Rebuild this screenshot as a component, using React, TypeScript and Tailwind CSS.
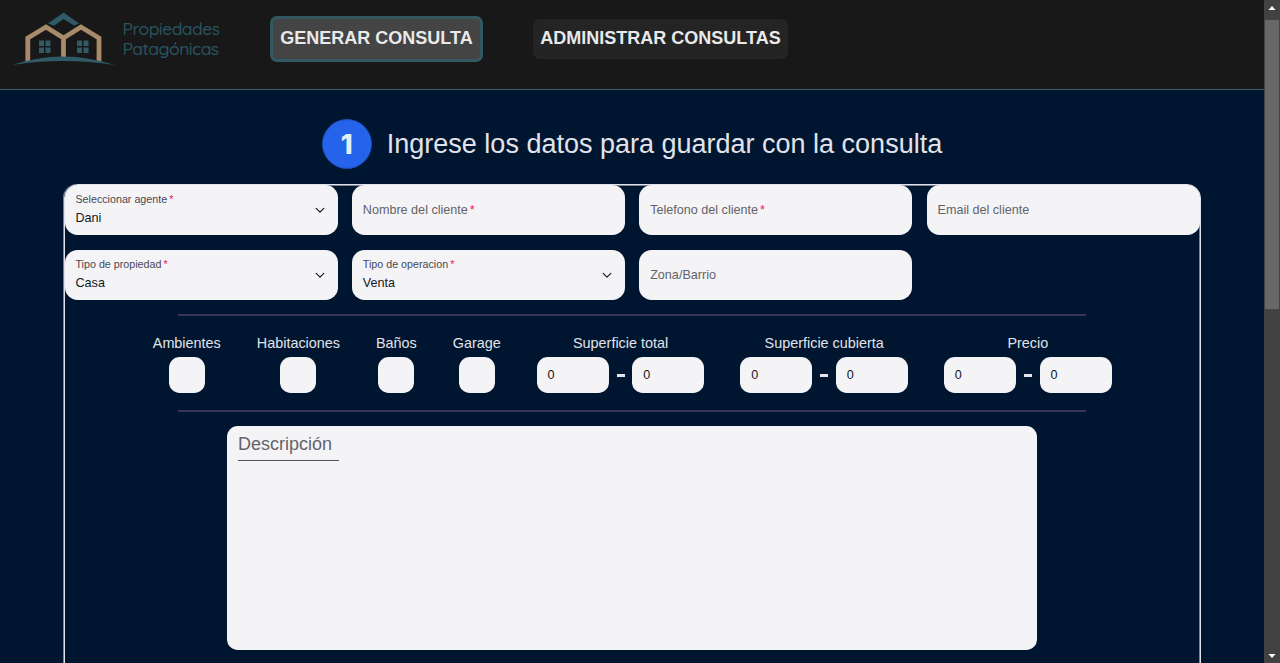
import React from "react";

function Logo() {
  return (
    <svg width="104" height="56" viewBox="0 0 104 56" className="shrink-0">
      <path d="M36 12.5 51.5 1.5 67 12.5 62 14.5 51.5 8 42 14.8Z" fill="#2f5a66" />
      <path
        d="M15.8 50V27L34 16 51.5 27 69 16 87 27V50M51.5 27V46"
        fill="none"
        stroke="#a98a6b"
        strokeWidth="4.8"
      />
      <path
        d="M27 29.500h5v5.500h-5zM33.500 29.500h5v5.500h-5zM27 36.500h5v5.500h-5zM33.500 36.500h5v5.500h-5zM65 29.500h5v5.500h-5zM71.500 29.500h5v5.500h-5zM65 36.500h5v5.500h-5zM71.500 36.500h5v5.500h-5z"
        fill="#2f5a66"
      />
      <path d="M0 54Q25 45.500 51 45.500Q77 45.500 103 54Q77 50 51 50Q25 50 0 54Z" fill="#2f5a66" />
    </svg>
  );
}

function Label({ text, required }: { text: string; required?: boolean }) {
  return (
    <>
      {text}
      {required && <span className="ml-[2px] text-[#f31260]">*</span>}
    </>
  );
}

function SelectField({ label, value }: { label: string; value: string }) {
  return (
    <div className="flex h-[50.4px] items-center justify-between rounded-[12.6px] bg-[#f4f4f7] pl-[10.8px] pr-[12px]">
      <div className="pb-[2px]">
        <div className="text-[10.71px] leading-[18px] text-[#484852]">
          <Label text={label} required />
        </div>
        <div className="text-[12.6px] leading-[20px] text-[#11181c]">{value}</div>
      </div>
      <svg width="12" height="12" viewBox="0 0 12 12" fill="none" stroke="#18181b" strokeWidth="1.2" strokeLinecap="round" strokeLinejoin="round">
        <path d="M2.200 4.400 6 8.100 9.800 4.400" />
      </svg>
    </div>
  );
}

function InputField({ label, required }: { label: string; required?: boolean }) {
  return (
    <div className="flex h-[50.4px] items-center rounded-[12.6px] bg-[#f4f4f7] px-[10.8px] text-[12.6px] text-[#63636b]">
      <span>
        <Label text={label} required={required} />
      </span>
    </div>
  );
}

function Count({ label }: { label: string }) {
  return (
    <div className="flex flex-col items-center">
      <span className="h-[23px] leading-[18px]">{label}</span>
      <div className="size-9 rounded-[10.8px] bg-[#f4f4f7]" />
    </div>
  );
}

function Range({ label }: { label: string }) {
  return (
    <div className="flex flex-col items-center">
      <span className="h-[23px] leading-[18px]">{label}</span>
      <div className="flex text-[12.6px] text-[#11181c]">
        <div className="flex h-9 w-[72px] items-center rounded-[10.8px] bg-[#f4f4f7] pl-[10.8px]">0</div>
        <div className="flex w-[23.6px] items-center justify-center">
          <div className="h-[3px] w-2 bg-[#e4e4ec]" />
        </div>
        <div className="flex h-9 w-[72px] items-center rounded-[10.8px] bg-[#f4f4f7] pl-[10.8px]">0</div>
      </div>
    </div>
  );
}

export default function App() {
  return (
    <div className="flex h-[663px] w-[1280px] overflow-hidden bg-[#001630] font-['Liberation_Sans',Arial,sans-serif]">
      <div className="flex w-[1264px] flex-col">
        <header className="flex h-[90px] shrink-0 items-start border-b border-[#3e5c66] bg-[#181818]">
          <div className="flex w-[270px] pl-[12px] pt-[11px]">
            <Logo />
            <div className="ml-[6.5px] mt-[7px] whitespace-nowrap font-['Quicksand','Lato',sans-serif] text-[17.5px] font-medium leading-[20px] text-[#285560]">
              <div className="tracking-[-0.55px]">Propiedades</div>
              <div className="tracking-[-0.55px]">Patagónicas</div>
            </div>
          </div>
          <nav className="flex items-center pt-4 text-[18px] font-bold text-[#e9e9ea]">
            <button className="h-[46px] w-[213px] whitespace-nowrap rounded-[7px] border-[3px] border-[#325861] bg-[#444] pb-[1px]">
              GENERAR CONSULTA
            </button>
            <button className="ml-[50px] h-10 w-[255px] whitespace-nowrap rounded-[7px] bg-[#242424] pb-[1px]">
              ADMINISTRAR CONSULTAS
            </button>
          </nav>
        </header>

        <main className="flex flex-1 flex-col">
          <div className="flex h-[94px] shrink-0 items-center justify-center gap-[15px] pt-[13px] text-[#e2e3ea]">
            <div className="flex size-[50px] items-center justify-center rounded-full border border-[#1d4cb8] bg-[#2563eb] pt-[4px] font-['Inter',sans-serif] text-[27px] font-extrabold text-[#e4eefc]">
              1
            </div>
            <h1 className="whitespace-nowrap pt-[2px] text-[27px]">Ingrese los datos para guardar con la consulta</h1>
          </div>

          <form className="ml-[63.7px] flex h-[700px] w-[1137px] shrink-0 flex-col items-center rounded-t-[14px] border border-[#e0e3ec] shadow-[-1px_0_0_#7a8296,inset_-1px_1px_0_#7a8296]">
            <div className="grid w-full grid-cols-4 gap-[14.4px]">
              <SelectField label="Seleccionar agente" value="Dani" />
              <InputField label="Nombre del cliente" required />
              <InputField label="Telefono del cliente" required />
              <InputField label="Email del cliente" />
              <SelectField label="Tipo de propiedad" value="Casa" />
              <SelectField label="Tipo de operacion" value="Venta" />
              <InputField label="Zona/Barrio" />
            </div>
            <div className="mt-[14px] h-[2px] w-[908px] shrink-0 bg-[#37355a]" />
            <div className="mt-[18px] flex gap-9 text-[14.4px] text-[#e2e3ea]">
              <Count label="Ambientes" />
              <Count label="Habitaciones" />
              <Count label="Baños" />
              <Count label="Garage" />
              <Range label="Superficie total" />
              <Range label="Superficie cubierta" />
              <Range label="Precio" />
            </div>
            <div className="mt-[17px] h-[2px] w-[908px] shrink-0 bg-[#37355a]" />
            <div className="mt-[14px] h-[224px] w-[810px] shrink-0 rounded-[10.8px] bg-[#f4f4f7] px-[10.8px] pt-[7px]">
              <div className="h-[28px] w-[101px] border-b border-[#52525b] text-[18px] leading-[23px] text-[#63636b]">
                Descripción
              </div>
            </div>
          </form>
        </main>
      </div>

      <div className="flex w-4 flex-col items-center bg-[#424242]">
        <svg width="16" height="20" viewBox="0 0 16 20">
          <path d="M4.500 10 8 6l3.500 4z" fill="#fff" />
        </svg>
        <div className="h-[289px] w-[14px] bg-[#686868]" />
        <svg width="16" height="16" viewBox="0 0 16 16" className="mt-auto">
          <path d="M4.500 7 8 11l3.500-4z" fill="#fff" />
        </svg>
      </div>
    </div>
  );
}
